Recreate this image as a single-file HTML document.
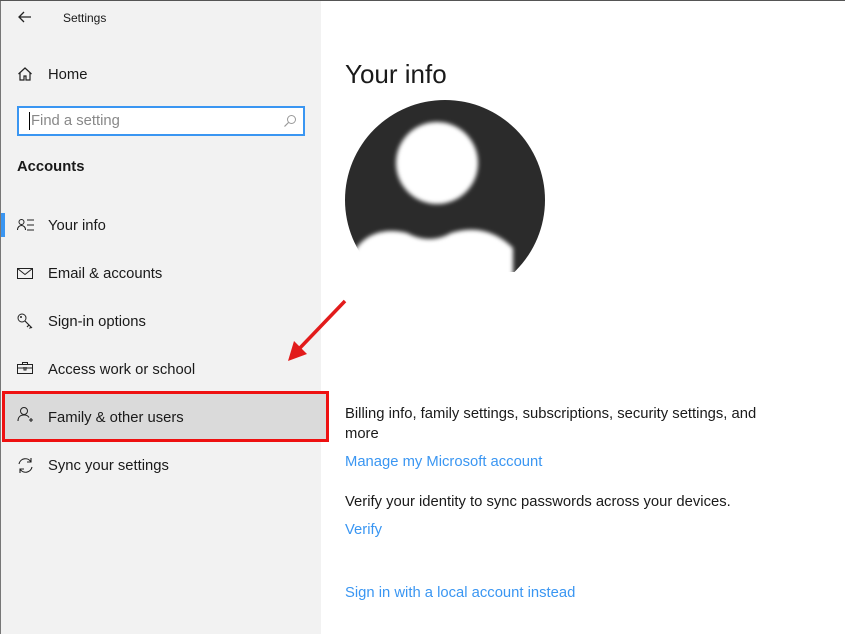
<!DOCTYPE html>
<html><head><style>
*{margin:0;padding:0;box-sizing:border-box}
body{width:845px;height:634px;position:relative;overflow:hidden;background:#fff;font-family:"Liberation Sans",sans-serif;color:#1a1a1a}
.side{position:absolute;left:0;top:0;width:321px;height:634px;background:#f2f2f2;border-left:1px solid #777}
.topline{position:absolute;left:0;top:0;width:845px;height:1px;background:#555}
.t{position:absolute;white-space:nowrap}
.nav{position:absolute;left:48px;font-size:14.8px}
.ic{position:absolute;left:17px}
.link{color:#3a96f2}
.m{font-size:14.8px}
</style></head><body>
<div class="side"></div>
<div class="topline"></div>
<svg class="ic" style="left:17px;top:10px" width="16" height="14" viewBox="0 0 16 14"><path d="M14 7H2M7 2L2 7l5 5" fill="none" stroke="#222" stroke-width="1.3"/></svg>
<div class="t" style="left:63px;top:11px;font-size:12px">Settings</div>
<svg class="ic" style="top:66px" width="16" height="16" viewBox="0 0 16 16"><path d="M1.5 8L8 2l6.5 6M3 7v7h4v-4h2v4h4V7" fill="none" stroke="#222" stroke-width="1.2"/></svg>
<div class="nav" style="top:67px">Home</div>
<div style="position:absolute;left:17px;top:106px;width:288px;height:30px;border:2px solid #3a96f2;background:#fff"></div>
<div style="position:absolute;left:29px;top:112px;width:1px;height:18px;background:#000"></div>
<div class="t" style="left:31px;top:113px;font-size:14.8px;color:#888">Find a setting</div>
<svg style="position:absolute;left:283px;top:114px" width="14" height="14" viewBox="0 0 14 14"><circle cx="8.5" cy="5.5" r="4" fill="none" stroke="#999" stroke-width="1"/><path d="M5.5 8.5L1.5 12.5" stroke="#999" stroke-width="1.2"/></svg>
<div class="t" style="left:17px;top:159px;font-size:14.8px;font-weight:bold">Accounts</div>
<div style="position:absolute;left:1px;top:213px;width:4px;height:24px;background:#3a96f2"></div>
<svg class="ic" style="top:218px" width="18" height="14" viewBox="0 0 18 14"><circle cx="4.5" cy="4" r="2.5" fill="none" stroke="#222"/><path d="M0.5 12c0-3 2-4.5 4-4.5s4 1.5 4 4.5M10 2h7M10 7h7M10 12h7" fill="none" stroke="#222" stroke-width="1.1"/></svg>
<div class="nav" style="top:218px">Your info</div>
<svg class="ic" style="top:267px" width="17" height="13" viewBox="0 0 17 13"><rect x="0.5" y="1.5" width="15" height="10" fill="none" stroke="#222"/><path d="M0.5 1.5l7.5 6 7.5-6" fill="none" stroke="#222"/></svg>
<div class="nav" style="top:266px">Email &amp; accounts</div>
<svg class="ic" style="top:313px" width="17" height="17" viewBox="0 0 17 17"><circle cx="5" cy="5" r="4" fill="none" stroke="#222"/><circle cx="4" cy="4" r="1" fill="#222"/><path d="M8 8l7 7M12 12l-2 2M14 14l-1.5 1.5" fill="none" stroke="#222" stroke-width="1.2"/></svg>
<div class="nav" style="top:314px">Sign-in options</div>
<svg class="ic" style="top:361px" width="17" height="14" viewBox="0 0 17 14"><rect x="0.5" y="3.5" width="15" height="9" fill="none" stroke="#222"/><path d="M5.5 3.5v-2h5v2M0.5 7h15M7 6v3h2V6" fill="none" stroke="#222"/></svg>
<div class="nav" style="top:362px">Access work or school</div>
<div style="position:absolute;left:2px;top:391px;width:327px;height:51px;background:#dadada;border:3px solid #ee1111"></div>
<svg class="ic" style="top:406px" width="18" height="18" viewBox="0 0 18 18"><circle cx="7" cy="5" r="3.5" fill="none" stroke="#222"/><path d="M1 15c0-4 2.5-6 6-6s4.5 1.5 5 2.5M12 14h4M14 12v4" fill="none" stroke="#222" stroke-width="1.1"/></svg>
<div class="nav" style="top:410px">Family &amp; other users</div>
<svg class="ic" style="top:457px" width="17" height="17" viewBox="0 0 17 17"><path d="M2 7a6.5 6.5 0 0 1 12-2M15 10a6.5 6.5 0 0 1-12 2M14 1v4h-4M3 16v-4h4" fill="none" stroke="#222" stroke-width="1.1"/></svg>
<div class="nav" style="top:458px">Sync your settings</div>
<svg style="position:absolute;left:280px;top:295px" width="70" height="70" viewBox="0 0 70 70"><path d="M65 6L18 55" stroke="#e21b1b" stroke-width="3.5"/><path d="M8 66L14 46L27 59Z" fill="#e21b1b"/></svg>
<div class="t" style="left:345px;top:59px;font-size:26px">Your info</div>
<svg style="position:absolute;left:345px;top:100px" width="200" height="200" viewBox="0 0 200 200"><defs><filter id="b"><feGaussianBlur stdDeviation="2"/></filter><clipPath id="c"><rect x="0" y="0" width="200" height="172"/></clipPath></defs><g clip-path="url(#c)"><circle cx="100" cy="100" r="100" fill="#2b2b2b"/><g filter="url(#b)"><circle cx="92" cy="63" r="41" fill="#fff"/><path d="M10 200V150c12-18 32-22 52-17 15 8 30 8 44 0 22-7 44-3 62 15V200Z" fill="#fff"/></g></g><rect x="0" y="172" width="200" height="30" fill="#fff"/></svg>
<div class="t m" style="left:345px;top:406px">Billing info, family settings, subscriptions, security settings, and</div>
<div class="t m" style="left:345px;top:426px">more</div>
<div class="t link m" style="left:345px;top:454px">Manage my Microsoft account</div>
<div class="t m" style="left:345px;top:494px">Verify your identity to sync passwords across your devices.</div>
<div class="t link m" style="left:345px;top:522px">Verify</div>
<div class="t link m" style="left:345px;top:585px">Sign in with a local account instead</div>
</body></html>
